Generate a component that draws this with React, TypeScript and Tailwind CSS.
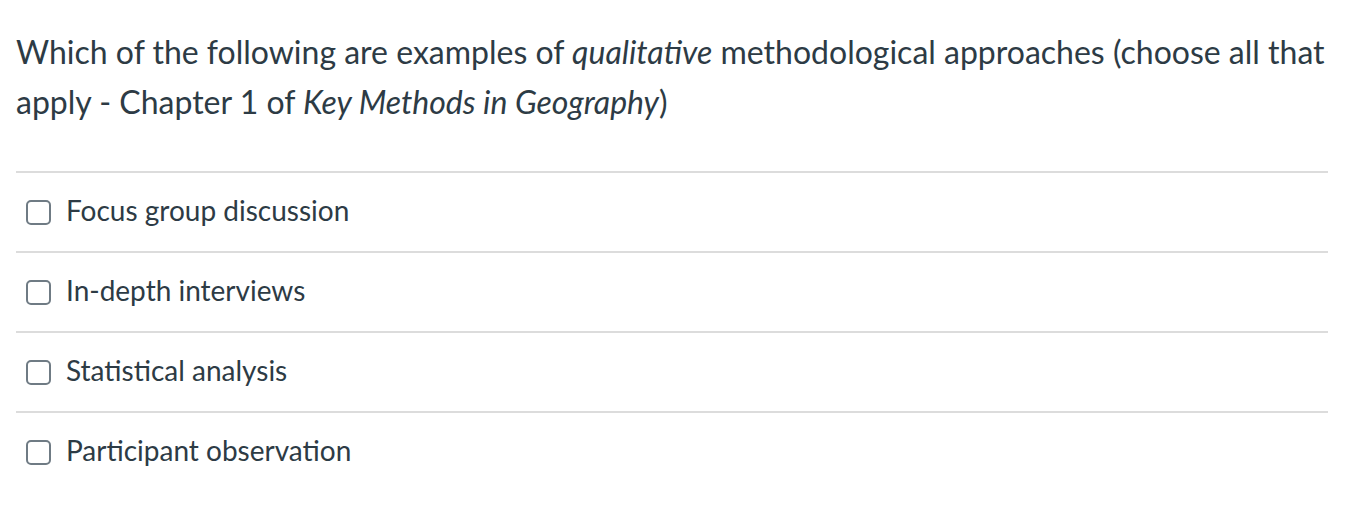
import React from 'react';

const options = [
  'Focus group discussion',
  'In-depth interviews',
  'Statistical analysis',
  'Participant observation',
];

export default function App() {
  return (
    <div className="min-h-[512px] bg-white pt-[27px] pl-4 pr-[26px] text-[#2d3b45]" style={{ fontFamily: 'Lato, "Open Sans", sans-serif' }}>
      <p className="text-[32px] leading-[50px]">
        Which of the following are examples of <em>qualitative</em> methodological approaches (choose all that apply - Chapter 1 of <em>Key Methods in Geography</em>)
      </p>
      <div className="mt-[44px]">
        {options.map((opt) => (
          <label key={opt} className="flex h-[80px] items-center gap-[15px] border-t-2 border-[#dcdcdc] pl-[10px]">
            <span className="h-[25px] w-[25px] shrink-0 rounded-[5px] border-2 border-[#6f7b84] bg-white" />
            <span className="text-[28px] leading-none -mt-[4px]">{opt}</span>
          </label>
        ))}
      </div>
    </div>
  );
}
